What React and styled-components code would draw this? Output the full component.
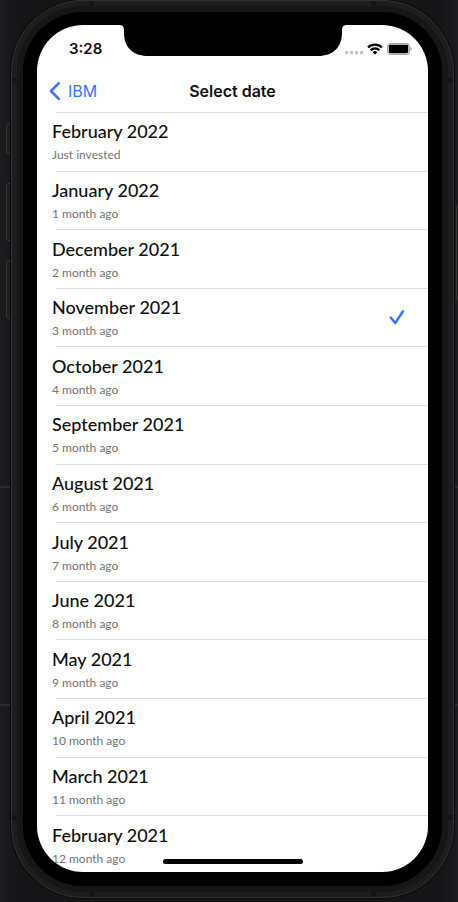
import React, { useState } from "react";
import styled, { createGlobalStyle } from "styled-components";

const GlobalStyle = createGlobalStyle`
  *, *::before, *::after { box-sizing: border-box; }
  body { margin: 0; background: #18181b; }
  button { font: inherit; background: none; border: 0; padding: 0; margin: 0; color: inherit; cursor: pointer; }
`;

const Desk = styled.div`
  position: relative;
  display: flex;
  min-height: 100vh;
  padding: 0 4px 4px 11px;
  background:
    linear-gradient(#2c2c2e, #2c2c2e) 0 486px / 100% 2px no-repeat,
    linear-gradient(#2c2c2e, #2c2c2e) 0 704px / 100% 2px no-repeat,
    linear-gradient(90deg, #1b1b20 0, #151517 20px, #151517 calc(100% - 20px), #1b1b20 100%);
`;

const SideKey = styled.span`
  position: absolute;
  top: ${(p) => p.$top}px;
  ${(p) => p.$side}: ${(p) => (p.$side === "left" ? 6 : 1)}px;
  width: 8px;
  height: ${(p) => p.$length}px;
  border: 1px solid #353533;
  border-radius: 3px;
  background: #1d1d1d;
`;

const Frame = styled.div`
  position: relative;
  flex: 1;
  display: flex;
  min-width: 0;
  padding: 5px;
  border: 1px solid #303030;
  border-radius: 72px;
  background: #1d1d1d;
  box-shadow: 0 0 0 1px #0b0b0b;
`;

const Antenna = styled.span`
  position: absolute;
  ${(p) => p.$v}: ${(p) => (p.$across ? 0 : 77)}px;
  ${(p) => p.$h}: ${(p) => (p.$across ? 77 : 0)}px;
  width: 5px;
  height: 5px;
  background: #141414;
`;

const Bezel = styled.div`
  flex: 1;
  display: flex;
  min-width: 0;
  border: 6px solid #161616;
  border-radius: 66px;
  background: #000000;
  padding: 13px 14px 14px 14px;
`;

const Screen = styled.main`
  position: relative;
  flex: 1;
  min-width: 0;
  display: flex;
  flex-direction: column;
  overflow: hidden;
  border-radius: 46px;
  background: #ffffff;
  color: #111111;
`;

const Notch = styled.svg`
  position: absolute;
  top: 0;
  left: 50%;
  transform: translateX(-50%);
`;

const StatusBar = styled.div`
  display: flex;
  justify-content: space-between;
  align-items: center;
  height: 47px;
  padding: 0 16px 0 32px;
  font: 600 15px/20px Inter, "Liberation Sans", sans-serif;
`;

const StatusIcons = styled.div`
  display: flex;
  align-items: center;
  gap: 4px;
`;

const NavBar = styled.header`
  display: grid;
  grid-template-columns: 1fr auto 1fr;
  align-items: center;
  height: 40px;
  padding: 0 12px 2px;
  font: 400 16px/20px Inter, "Liberation Sans", sans-serif;
`;

const BackButton = styled.button`
  justify-self: start;
  display: flex;
  align-items: center;
  gap: 7px;
  && { color: #3478ff; }
`;

const Title = styled.h1`
  margin: 0;
  font-size: 16px;
  font-weight: 600;
  line-height: 20px;
`;

const DateList = styled.ul`
  flex: 1;
  display: flex;
  flex-direction: column;
  margin: 0 0 -2px;
  padding: 0;
  list-style: none;
  font-family: Lato, "Open Sans", sans-serif;
`;

const DateItem = styled.li`
  flex: 1 0 58px;
  display: flex;
  background: linear-gradient(#dededf, #dededf) 19px 0 / 100% 1px no-repeat;
`;

const DateButton = styled.button`
  flex: 1;
  display: flex;
  align-items: center;
  justify-content: space-between;
  && { padding: 0 22px 0 15px; }
  text-align: left;
`;

const Labels = styled.span`
  display: flex;
  flex-direction: column;
  gap: 4px;
`;

const Month = styled.span`
  font-size: 18px;
  font-weight: 500;
  line-height: 24px;
`;

const Age = styled.span`
  font-size: 12px;
  line-height: 16px;
  color: #747474;
`;

const HomeIndicator = styled.span`
  position: absolute;
  left: 50%;
  bottom: 8px;
  width: 140px;
  height: 5px;
  border-radius: 3px;
  background: #000000;
  transform: translateX(-50%);
`;

const months = [
  ["February 2022", "Just invested"],
  ["January 2022", "1 month ago"],
  ["December 2021", "2 month ago"],
  ["November 2021", "3 month ago"],
  ["October 2021", "4 month ago"],
  ["September 2021", "5 month ago"],
  ["August 2021", "6 month ago"],
  ["July 2021", "7 month ago"],
  ["June 2021", "8 month ago"],
  ["May 2021", "9 month ago"],
  ["April 2021", "10 month ago"],
  ["March 2021", "11 month ago"],
  ["February 2021", "12 month ago"],
];

const SignalDots = () => (
  <svg width="18" height="12" viewBox="0 0 18 12" fill="#c4c4c6" aria-hidden="true">
    {[0, 5, 10, 15].map((x) => (
      <rect key={x} x={x} y="8" width="3.2" height="3.2" rx="1" />
    ))}
  </svg>
);

const WifiIcon = () => (
  <svg width="16" height="12" viewBox="0 0 16 12" aria-hidden="true">
    <g fill="none" stroke="#000" strokeWidth="2.2">
      <path d="M1 4.4a10 10 0 0 1 14 0" />
      <path d="M3.6 7.2a6.2 6.2 0 0 1 8.8 0" />
    </g>
    <path d="M8 11.6 5.6 9.2a3.4 3.4 0 0 1 4.8 0z" fill="#000" />
  </svg>
);

const BatteryIcon = () => (
  <svg width="25" height="12" viewBox="0 0 25 12" aria-hidden="true">
    <rect x=".6" y=".6" width="21.8" height="10.8" rx="3" fill="#fff" stroke="#a9a9a9" strokeWidth="1.2" />
    <rect x="1.8" y="1.8" width="19.4" height="8.4" rx="1.4" fill="#000" />
    <path d="M23.4 4v4c.9-.4 1.4-1.1 1.4-2s-.5-1.6-1.4-2z" fill="#a9a9a9" />
  </svg>
);

const BackChevron = () => (
  <svg width="12" height="20" viewBox="0 0 12 20" fill="none" aria-hidden="true">
    <path d="M9.8 2.2 2 10l7.8 7.8" stroke="#3478ff" strokeWidth="2.6" strokeLinecap="round" strokeLinejoin="round" />
  </svg>
);

const CheckIcon = () => (
  <svg width="17" height="16" viewBox="0 0 17 16" fill="none" role="img" aria-label="Selected">
    <path d="M1.8 8.6 6.3 14 14 2.2" stroke="#3478ff" strokeWidth="2.5" strokeLinecap="round" strokeLinejoin="round" />
  </svg>
);

export default function App() {
  const [selected, setSelected] = useState("November 2021");
  return (
    <Desk>
      <GlobalStyle />
      <SideKey $side="left" $top={123} $length={31} />
      <SideKey $side="left" $top={183} $length={58} />
      <SideKey $side="left" $top={260} $length={59} />
      <SideKey $side="right" $top={203} $length={99} />
      <Frame>
        {["top", "bottom"].map((v) =>
          ["left", "right"].map((h) => (
            <React.Fragment key={v + h}>
              <Antenna $v={v} $h={h} $across />
              <Antenna $v={v} $h={h} />
            </React.Fragment>
          ))
        )}
        <Bezel>
          <Screen>
            <Notch width="228" height="32" viewBox="0 0 228 32" aria-hidden="true">
              <path d="M0 0h228c-4 0-5 2-5 6v2c0 14-9 23-24 23H29C14 31 5 22 5 8V6c0-4-1-6-5-6z" fill="#000" />
            </Notch>
            <StatusBar>
              <span>3:28</span>
              <StatusIcons>
                <SignalDots />
                <WifiIcon />
                <BatteryIcon />
              </StatusIcons>
            </StatusBar>
            <NavBar>
              <BackButton type="button">
                <BackChevron />
                IBM
              </BackButton>
              <Title>Select date</Title>
            </NavBar>
            <DateList>
              {months.map(([month, age]) => (
                <DateItem key={month}>
                  <DateButton type="button" aria-pressed={selected === month} onClick={() => setSelected(month)}>
                    <Labels>
                      <Month>{month}</Month>
                      <Age>{age}</Age>
                    </Labels>
                    {selected === month && <CheckIcon />}
                  </DateButton>
                </DateItem>
              ))}
            </DateList>
            <HomeIndicator />
          </Screen>
        </Bezel>
      </Frame>
    </Desk>
  );
}
